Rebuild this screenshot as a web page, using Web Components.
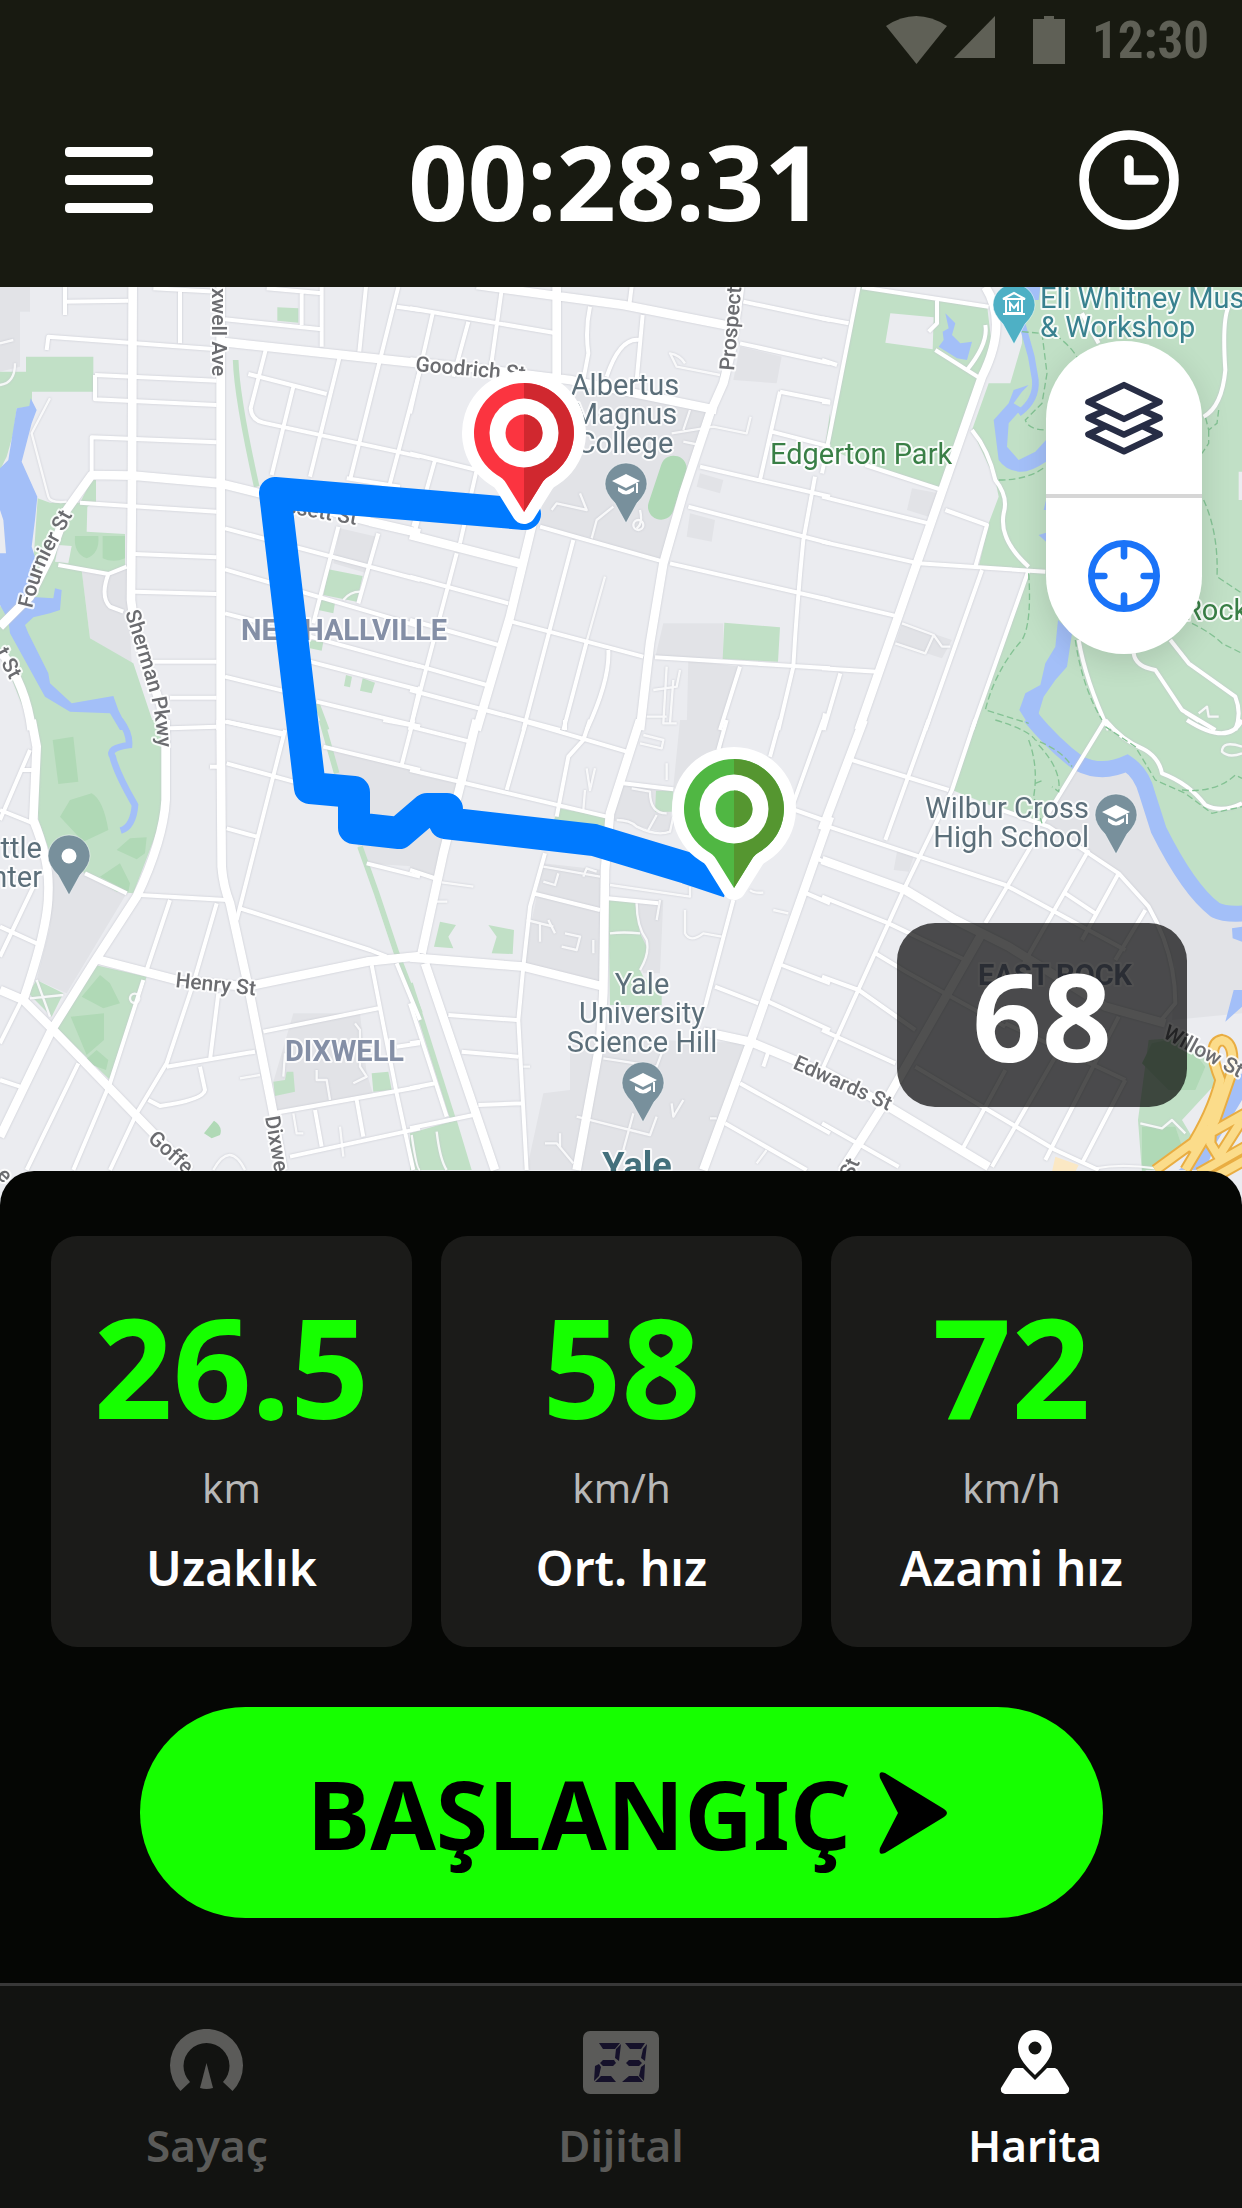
<!DOCTYPE html>
<html lang="tr">
<head>
<meta charset="utf-8">
<meta name="viewport" content="width=device-width, initial-scale=1">
<title>Harita</title>
<style>
  html, body { margin: 0; background: #050604; }
  body { font-family: "Noto Sans", "Open Sans", sans-serif; color: #fff; }
</style>
</head>
<body>
<app-shell>
  <status-bar slot="top">12:30</status-bar>
  <top-bar slot="top">00:28:31</top-bar>
  <map-view slot="map">
    <map-controls></map-controls>
    <speed-badge>68</speed-badge>
  </map-view>
  <stats-panel slot="panel">
    <stat-card><span slot="value">26.5</span><span slot="unit">km</span>Uzaklık</stat-card>
    <stat-card><span slot="value">58</span><span slot="unit">km/h</span>Ort. hız</stat-card>
    <stat-card><span slot="value">72</span><span slot="unit">km/h</span>Azami hız</stat-card>
    <start-button slot="action">BAŞLANGIÇ</start-button>
  </stats-panel>
  <tab-bar slot="tabs">
    <tab-item href="#sayac">
      <svg slot="icon" width="74" height="66" viewBox="0 0 74 66" fill="#5b5b59"><path d="M10.500 62A36.500 36.500 0 1 1 62.500 62L53 53A23 23 0 1 0 20 53Z"/><path d="M36.500 34L43 59Q36.500 61 30 59Z"/></svg>
      Sayaç
    </tab-item>
    <tab-item href="#dijital">
      <svg slot="icon" width="76" height="66" viewBox="0 0 76 66"><rect y="2" width="76" height="63" rx="7" fill="#5b5b59"/><g fill="#15112a"><path d="M16 14H37L32 20H20ZM38 15L36 32L32 29L33 20ZM20 31H31L33 34L30 37H20L17 34ZM16 35L18 38L16 47L11 52L12 37ZM18 47H28L33 53H12ZM42 14H62L58 20H47ZM64 15L62 32L58 29L60 20ZM46 31H56L59 34L56 37H46L43 34ZM58 38L62 35L61 52L56 47ZM46 47H55L60 53H39Z"/></g></svg>
      Dijital
    </tab-item>
    <tab-item href="#harita" active>
      <svg slot="icon" width="70" height="66" viewBox="0 0 70 66" fill="#fff"><path fill-rule="evenodd" d="M35 1C45 1 52 9 52 19C52 30 42 39 35 46C28 39 18 30 18 19C18 9 25 1 35 1ZM35 12.500A6.500 6.500 0 1 0 35 25.500A6.500 6.500 0 1 0 35 12.500Z"/><path d="M15 39H23L35 51L47 39H55Q58 40 59 43L69 59Q70 64 65 65H5Q0 64 1 59L11 43Q12 40 15 39Z"/></svg>
      Harita
    </tab-item>
  </tab-bar>
</app-shell>

<script>
const define = (name, markup, setup) => {
  const template = document.createElement('template');
  template.innerHTML = markup;
  customElements.define(name, class extends HTMLElement {
    connectedCallback() {
      if (this.shadowRoot) return;
      this.attachShadow({ mode: 'open' }).append(template.content.cloneNode(true));
      if (setup) setup(this, this.shadowRoot);
    }
  });
};

define('app-shell', `
  <style>
    :host { display: flex; flex-direction: column; min-height: 100vh; }
    .map { flex: 1; display: flex; min-height: 600px; }
    .map ::slotted(*) { flex: 1; }
    main { display: flex; flex-direction: column; flex: 1; }
  </style>
  <header><slot name="top"></slot></header>
  <main><div class="map"><slot name="map"></slot></div><slot name="panel"></slot></main>
  <slot name="tabs"></slot>`);

define('status-bar', `
  <style>
    :host { display: flex; justify-content: flex-end; align-items: center; height: 72px; padding: 10px 33px 0 0; box-sizing: border-box; background: #181a11; color: #5f6056; font: 700 51px/62px "Roboto Condensed", Roboto, sans-serif; }
    svg { margin-right: 26px; }
  </style>
  <svg width="180" height="50" viewBox="0 0 180 50" fill="currentColor" aria-hidden="true"><path d="M0 10Q30-10 61 10L30.500 48Z"/><path d="M109 0V42H68Z"/><path d="M147 3H158V0H168V3H179V48H147Z"/></svg>
  <slot></slot>`);

define('top-bar', `
  <style>
    :host { display: flex; justify-content: space-between; align-items: center; height: 215px; padding: 0 63px 0 65px; box-sizing: border-box; background: #181a11; }
    button { padding: 0; border: 0; background: none; color: #fff; display: flex; }
    h1 { margin: 0; padding-top: 3px; font-size: 104px; line-height: 140px; font-weight: 700; }
  </style>
  <button aria-label="Menü"><svg width="88" height="66" viewBox="0 0 88 66" fill="currentColor"><rect width="88" height="10" rx="4"/><rect y="28" width="88" height="10" rx="4"/><rect y="56" width="88" height="10" rx="4"/></svg></button>
  <h1><slot></slot></h1>
  <button aria-label="Geçmiş"><svg width="100" height="100" viewBox="0 0 100 100" fill="none" stroke="currentColor" stroke-width="9.500" stroke-linecap="round" stroke-linejoin="round"><circle cx="50" cy="50" r="45"/><path d="M50 30V50H75"/></svg></button>`);

const SHEETS = { a: [0, 280], b: [410, 280], c: [822, 280], d: [0, 720], e: [410, 720], f: [822, 720] };
const sheet = (id, body) => `<g transform="translate(${SHEETS[id]}) scale(.33333)">${body}</g>`;
const p = (cls, d) => `<path class="${cls}" d="${d}"/>`;

const land = [
  sheet('a', p('block', 'M0 20H90V95H60V260L0 275ZM245 870L380 860L395 1150L270 1075ZM1020 745L1130 770L1100 880L1000 850Z')
    + p('park', 'M0 275H78V230H280V335H96V380L50 385L40 460L20 530L0 570ZM113 655L150 668H240L275 600H288V665L262 680L260 755L375 762V860L325 880L245 870L270 1075L400 1150L470 1360H100L40 1210L0 1110V980L100 850ZM832 82L895 85V128L832 122ZM985 868L1088 888L1070 965L970 945ZM960 955L1005 968L1000 1000L955 990ZM930 1080L970 1085L965 1112L930 1105ZM1038 1185L1056 1190L1050 1222L1032 1218ZM1088 1195L1125 1208L1115 1240L1080 1232Z')
    + p('base', 'M175 795L215 798L205 850L165 845Z')
    + p('grove', 'M225 768L295 768Q300 820 260 835Q220 820 225 768ZM308 768H375V835Q340 850 308 835Z')
    + p('rail', 'M707 240Q710 350 770 620M950 1270L980 1350')),
  sheet('b', p('block', 'M500 310L900 400L830 640L760 840L390 740L400 620ZM990 200L1115 230L1100 310L970 300ZM870 580L940 600L930 640L860 620ZM840 700L915 720L905 785L830 770ZM760 1030H940V1135H735ZM835 1140L990 1160L930 1350H830Z')
    + p('park', 'M943 1028L1110 1042L1104 1145L938 1137ZM1260 400L1245 500H1260Z')
    + '<path d="M791 566L753 680" stroke="#b0d9b6" stroke-width="78" stroke-linecap="round"/>'),
  sheet('c', p('park', 'M115 20L495 75L510 200L470 300L355 625L130 555L10 500ZM500 310H565L600 190V20H1260V1930L1180 1890L1080 1780L1000 1650L940 1450L770 1450L660 1630L540 1590L390 1530L620 870L470 860L500 730L530 650L520 600L450 450Z')
    + p('base', 'M205 100L335 112L332 208L190 188ZM1250 575H1260V660H1250Z')
    + p('block', 'M270 625L350 640L320 710L255 690ZM240 1030L390 1080L360 1135L220 1090Z')),
  sheet('d', p('block', 'M160 420L255 460L380 520L200 820L110 780L150 620ZM980 85L1260 150V440L1090 430L1050 300ZM880 880L1080 880L1100 1060L1120 1125L830 1170L820 1085Z')
    + p('park', 'M100 0H470L495 100L480 310L400 520L350 515L255 460L150 400L115 300ZM285 735L440 770L405 870L330 1080L170 925ZM110 780L190 820L155 890L85 820ZM820 1085L855 1080L860 1055H880L885 1115L825 1128ZM1115 1060L1165 1055L1175 1110L1120 1115Z')
    + p('grove', 'M158 60L220 50L235 185L175 192ZM180 290L210 240L275 220Q310 240 325 330L250 365ZM350 390L390 355L440 352L435 400L410 418ZM300 470L360 430L390 490L385 515ZM245 830L300 765L330 790L360 850L310 865ZM212 890L312 880V960L260 1005ZM250 1025L290 990L325 1020L318 1050ZM612 1240L642 1202Q670 1220 660 1245L635 1255Z')
    + p('rail', 'M965 0L1010 160M1080 380L1130 520L1190 700L1260 880')),
  sheet('e', p('block', 'M810 0H950L900 330L790 200ZM630 190L790 210L780 340L600 300ZM400 430L580 450L570 790L340 730ZM640 540H760L750 760L700 760ZM480 950L1020 970L880 1350H350L400 1120L480 1110ZM0 160L140 190L90 470L0 450Z')
    + p('park', 'M595 540L675 545L690 640L715 690L690 750L700 770L755 820V855H600ZM445 265L585 290L588 322L430 305ZM738 212H790L785 275H735ZM90 605L138 615L115 650L130 685L72 680ZM235 615L312 630L308 702L245 700L260 650ZM0 1240L140 1200L185 1350H0Z')
    + p('rail', 'M0 790L130 1200')),
  sheet('f', p('block', 'M660 310L770 140H930L1000 330L1080 480L1180 570L1260 600V880L1050 900L1060 740L1000 610L900 460ZM225 395L275 410L260 455L215 450Z')
    + p('park', 'M980 960L1100 950L1210 1060L1080 1200L1110 1250L960 1360L948 1200Z')
    + p('grove', 'M990 970L1080 950L1150 1040L1120 1110L1040 1110L960 1030ZM960 1220L1060 1220L1080 1280L1000 1350H960Z')
    + '<path fill="#fbe8c4" d="M700 1310L770 1335L760 1355H690Z"/>')
].join('');

const water = [
  sheet('a', p('water', 'M50 385L88 378L92 355L110 390L95 430L65 545L112 650L105 720L95 800L108 840L105 880L85 950L160 955L165 925L185 930L180 990L150 1000L100 1012L75 1035L85 1060L145 1180L150 1210L215 1270L340 1248L355 1290L385 1350H360L330 1300L210 1295L135 1250L30 1060L25 1020L0 975V820H18L10 720L0 690V565L25 540Z')),
  sheet('c', p('water', 'M370 100L400 130L390 165L415 190L450 185L435 240L405 235L350 200L365 180L362 155L380 145ZM605 20H655L650 60H610ZM515 420L560 370L575 330L620 315L600 335L575 370L600 385L560 430L555 500L590 540L640 515L672 480V545Q620 580 590 575Q550 570 530 540ZM672 660L665 690H672ZM650 765L672 758V785ZM708 1020L750 1060L735 1160L700 1200L665 1250L650 1300L675 1350H630L592 1290L610 1240L655 1215L670 1150L700 1100Z')
    + '<path d="M618 70L600 130L628 230L640 300Q645 360 590 400" fill="none" stroke="#a3bff8" stroke-width="20"/>'),
  sheet('d', '<path d="M360 0Q390 40 387 75Q320 85 338 110Q350 160 405 255Q400 320 362 332" fill="none" stroke="#a3bff8" stroke-width="20"/>'),
  sheet('f', '<path d="M625 -10Q700 80 770 130Q840 165 915 130Q960 160 975 220L1010 330Q1100 510 1180 570Q1210 585 1270 580" fill="none" stroke="#a3bff8" stroke-width="48"/>'
    + p('water', 'M1230 625L1260 620V665L1232 655ZM1235 810H1260V860L1210 905ZM1195 1170L1215 1100L1260 1060V1140L1170 1290ZM1070 1350L1190 1250L1150 1350Z'))
].join('');

const roads = [
  sheet('a', p('r3', 'M398 20L396 590L393 960L405 1050L480 1270L497 1350M662 20V1350M0 1040L90 950L150 830L200 690L275 585L400 587L660 610L780 640L1110 725L1260 760M0 1110Q80 1220 95 1350M660 185L1260 250')
    + p('r1', 'M195 20V105M195 65L385 62M540 25V190M460 25L650 35M140 210L145 170L650 208M285 285L650 302M285 285V358L650 375M275 585V472L650 487M240 668L650 695M405 822L650 832M405 935L650 942M440 1145H650M510 1253H650M175 855L325 882L380 860M325 882Q300 950 330 980L370 995M675 118L965 148M965 20V200M905 40V135M800 25L965 40M1098 20L1078 215M1195 20L1145 220L1050 600M1190 80L1260 90M797 210L752 385Q755 420 790 428L1260 530M745 282L980 342M880 320L815 585M1018 235L930 590M1260 270L1170 610M1040 595L1200 620M675 745L1260 900M675 868L1260 1040M675 1000L810 1035M930 1070L1260 1160M675 1190L860 1235M930 1145L1260 1230M950 1265L1260 1340M675 1325L850 1360M1015 740L940 1030M1135 760L1075 970M1260 1220L1230 1350M1240 740L1250 700')
    + p('r0', 'M150 355L95 460L145 650Q150 670 200 665M0 190L40 180M0 315Q45 310 45 250M1030 960Q1050 935 1080 935')),
  sheet('b', p('r3', 'M200 15L440 48L640 75L960 138M440 20V290M0 245L200 265L480 300L920 390M990 20L965 210L940 310L900 400L820 640L760 850L720 1090L690 1350M375 700L300 1010L200 1350M0 765L330 850')
    + p('r1', 'M0 85L430 158M275 30L240 280M68 100L0 400M175 125L130 290M665 20L658 75M540 80Q525 150 535 220L520 300M698 105L680 300M590 290Q630 170 690 180M1000 65L1260 120M990 190L1260 250M1110 335L1050 600M1110 335L1260 365M1085 455L1260 500M870 560L1260 650M835 680L1260 790M780 850L1260 960M1215 590L1180 780Q1160 980 1150 1160L1105 1350M1245 1300L1235 1350M735 1132L1260 1165M990 1160L930 1350M390 740L760 845M490 780L340 1350M530 1085L460 1350M595 1110Q600 1200 530 1350M305 1025L700 1130M0 520L200 570M0 890L295 970M0 1020L265 1095M0 1150L230 1215M0 1230L450 1350M140 820L0 1350M75 540L10 770M200 570L150 790')
    + p('r0', 'M585 890L530 1085M930 285L800 260L780 220Q810 225 825 250M545 775L560 720L610 680M690 690Q700 730 680 745M670 735A14 14 0 1 0 700 735A14 14 0 1 0 670 735M425 690L440 670L530 690L510 640M785 460L910 440L1010 460L1022 410M820 485L870 495M840 390L820 450M770 1160L760 1330L800 1330M730 1230L800 1220L810 1170M790 1200L780 1330M710 1310H770')),
  sheet('c', p('r3', 'M490 20Q560 130 480 290L110 1350')
    + p('r1', 'M110 20L0 580M0 115L80 130M0 240L45 255M0 365L25 368M120 22L500 80M345 60V130L320 155M340 210L470 292M490 135Q500 190 435 270M130 555L360 630M0 650L320 730M0 785L290 850L670 875M0 955L230 1010M370 690L495 735L460 860M480 870L310 1350M620 870L450 1350M0 1165L165 1175M55 1180L5 1350M450 450Q500 510 520 600Q560 650 545 700Q530 780 620 860M1220 80Q1200 120 1210 270Q1200 380 1145 410M770 1080Q790 1200 860 1350M935 1120Q940 1160 1000 1170L1080 1290L1180 1350M1045 1080L1100 1150L1240 1250Q1260 1300 1240 1350M780 100L830 190')
    + p('r0', 'M240 1030L335 1065L310 1120L220 1090M335 1065L360 1100H385M1130 1300L1155 1280L1160 1310H1190M1090 1300L1130 1325')),
  sheet('d', p('r3', 'M497 0V240Q490 360 410 530L280 730L155 930L0 1250M662 0L665 440Q670 500 690 550L745 800L820 1180L850 1350M95 0L110 80L100 300Q150 420 145 520Q145 620 70 840M280 715L530 780L740 800L1100 725L1260 708M0 810L70 840L160 930L460 1240L570 1350')
    + p('r1', 'M510 25L650 20M680 5L850 45M855 30L710 600M630 140H660M680 130L900 190M680 325L770 350M420 525L680 540M650 550L580 790L500 1030L410 1180L330 1350M510 540L440 750M720 565L1110 690L1160 710M255 460L380 520M790 935L1135 865M1115 735L1190 1120L1240 1350M500 1040L765 995M655 820L630 1020M600 1040L615 1110Q610 1140 480 1158L445 1140M430 780L330 1090L220 1350M235 1030L80 1350M0 620L110 670M100 500L0 710M0 270L100 310M90 90L0 300M60 150H100M70 830L0 970M0 1080L60 1100M820 1180L1260 1100M870 1310L1260 1225M945 1170L965 1280M1070 1140L1090 1250M1190 980L1260 970M1190 730L1260 900M970 80L1260 150M1100 430L1260 470M1150 0L1260 20M1240 0L1205 135')
    + p('r0', 'M390 835A14 14 0 1 0 418 835A14 14 0 1 0 390 835M90 835L190 825M110 780L150 890M640 1350Q690 1260 735 1350M720 1075L780 1065M850 1070L855 1000M950 1050V1080H980L990 1140M1065 910L1080 930V1040L1100 1070L1060 1090M880 1180L890 1240H910M1020 1220L1030 1310')),
  sheet('e', p('r3', 'M200 0L150 200L100 400L35 700M690 0L600 280L585 450L580 820L570 970L500 1350M0 712L340 740L580 800M880 935L1020 965L1260 1065M1260 290L1020 970L880 1350M45 730L255 1350')
    + p('r1', 'M0 20L180 65M0 150L590 290M350 0L290 210M345 5L650 95M465 30V0M540 0L520 60L475 110L440 290M405 400L360 560L340 740L325 900L350 1350M950 0L925 90M1110 0L1080 110M1240 0L1150 250M640 190L790 208M1150 268L1240 300M970 540L885 860M1220 415L1260 435M1190 520L1260 550M1115 735L1260 790M915 800L1045 850M1075 845L1260 930M990 1090L1260 1240M945 1210L1190 1350M115 885L320 900M155 995L325 1010M205 1155L335 1150M0 1225L190 1185M0 450L90 480M0 970L30 965M0 1105L75 1090M0 850L110 1190M1060 1040L1080 980M370 520L570 570M595 535L745 550')
    + p('r0', 'M95 487L190 500M80 545H112M600 495L840 530V500M680 550Q680 620 710 660Q720 700 690 750M600 640Q640 635 690 640M750 540L740 600M350 600L430 620M390 610V665M415 600L435 640M455 680L500 690L510 650L465 640M550 660V700M400 440L570 470M400 485L435 495L445 460M520 470L530 445L560 455M825 570V640Q840 670 880 640L935 650M1090 570L1135 580M1020 510Q1030 520 1060 518M620 300Q660 300 680 320Q740 350 780 335L790 290M665 205L720 215Q720 280 770 280M740 285L715 330M530 145L540 210L555 145M525 210L520 270M500 1190L720 1245L740 1190M670 1180L640 1290M405 1270H440L490 1330M450 1240V1280M785 1150L790 1190L820 1140M900 1195H920M580 1015L740 1040L755 1000M5 1245Q20 1350 30 1350M80 1235Q90 1320 110 1350M1070 1290L1040 1330M340 1040H360M770 130V180M690 70L755 85L760 60L700 45')),
  sheet('f', p('r3', 'M125 0L0 330M0 420L250 510L400 600L560 680L850 860L1030 910M480 640L200 1130L60 1350M0 1050L200 1160L500 1340')
    + p('r1', 'M850 0L660 310M850 0Q900 60 960 85Q1010 110 1020 160Q1100 190 1150 255Q1200 280 1260 250M1095 0Q1220 80 1260 0M460 0L390 210M320 0L190 360M90 120L380 210M20 320L550 495L910 690M540 270L680 320L890 460L980 560Q1060 700 1060 850L1010 910M390 210L240 520L0 1050M650 340L490 610M800 390L600 740M890 460L780 660M730 520L820 580M970 570L880 720M0 530L200 610L430 720M160 700L260 760L550 920M0 770L110 810L280 930M0 930L220 1030M0 1210L230 1340M280 1040L700 1290L830 1350M550 1050L420 1290M700 1010L510 1340M890 890L670 1320M910 1080L780 1330M550 910L910 1080')
    + p('r0', 'M820 1345Q900 1330 1000 1345M955 1210L1020 1225L1050 1200L1090 1240M1260 80Q1200 60 1200 95Q1220 115 1260 100'))
].join('');

const trails = sheet('c', p('trail', 'M600 155L660 160L675 280L660 370L610 420Q620 450 672 450M700 165Q750 200 770 240M530 600Q620 600 670 560M1190 390L1185 430L1160 450L1150 410M1160 450V490L1140 520M1145 660Q1190 760 1185 890L1260 940M620 880Q630 1030 600 1080Q520 1170 490 1290L620 1330M1110 1030Q1170 1060 1200 1090L1260 1120M760 1080Q780 1220 840 1320'))
  + sheet('f', p('trail', 'M520 0Q620 30 640 60Q720 90 750 140M620 60Q650 140 635 230L660 310M650 75Q720 150 710 215L690 200M640 190L665 180M850 20L940 80L1000 180L1090 220L1170 280L1260 260M1080 210Q1180 220 1240 165L1260 175'));

const expressways = sheet('f', ['e1', 'e2'].map(c => p(c, 'M1100 1290Q1170 1180 1195 1080Q1150 970 1200 960Q1245 970 1225 1070L1180 1200L1090 1350M1195 1080L1170 1180L1165 1270L1190 1310L1260 1200M1000 1350L1110 1270L1270 1180M1130 1360L1270 1280M1180 1370L1270 1320')).join(''));

const label = (x, y, lines, cls = 'poi', anchor = 'start', rot = 0) => [].concat(lines)
  .map((t, i) => `<text class="${cls}" x="${x}" y="${y + i * 29}" text-anchor="${anchor}"${rot ? ` transform="rotate(${rot} ${x} ${y})"` : ''}>${t}</text>`).join('');

const labels = [
  label(625, 395, ['Albertus', 'Magnus', 'College'], 'poi', 'middle'),
  label(642, 994, ['Yale', 'University', 'Science Hill'], 'poi', 'middle'),
  label(1089, 818, ['Wilbur Cross', 'High School'], 'poi', 'end'),
  label(42, 858, ['ttle', 'nter'], 'poi', 'end'),
  label(1040, 308, ['Eli Whitney Mus', '&amp; Workshop'], 'museum'),
  label(770, 464, 'Edgerton Park', 'green'),
  label(1184, 620, 'Rock', 'green'),
  label(241, 640, 'NEWHALLVILLE', 'area'),
  label(285, 1061, 'DIXWELL', 'area'),
  label(978, 985, 'EAST ROCK', 'area'),
  label(637, 1178, 'Yale', 'big', 'middle'),
  label(415, 371, 'Goodrich St', 'street', 'start', 5),
  label(734, 371, 'Prospect', 'street', 'start', -85),
  label(212, 288, 'xwell Ave', 'street', 'start', 90),
  label(175, 987, 'Henry St', 'street', 'start', 6),
  label(356, 525, 'Bassett St', 'street', 'end', 10),
  label(-5, 652, 't St', 'street', 'start', 62),
  label(147, 1140, 'Goffe', 'street', 'start', 42),
  label(265, 1117, 'Dixwe', 'street', 'start', 80),
  label(792, 1068, 'Edwards St', 'street', 'start', 24),
  label(1162, 1037, 'Willow St', 'street', 'start', 28),
  label(852, 1180, 'St', 'street', 'start', -66),
  label(-4, 1176, 'e', 'street', 'start', 45),
  '<path id="fournier" fill="none" d="M32 609Q42 565 58 542L78 505"/><text class="street"><textPath href="#fournier">Fournier St</textPath></text>',
  '<path id="sherman" fill="none" d="M125 612Q140 660 152 700Q158 730 158 760"/><text class="street"><textPath href="#sherman">Sherman Pkwy</textPath></text>'
].join('');

const drop = 'M0 39L-11 19Q-21 9 -21 0A21 21 0 0 1 21 0Q21 9 11 19Z';
const place = (x, y, color, glyph) => `<g transform="translate(${x} ${y})"><path d="${drop}" fill="${color}" stroke="#fff" stroke-opacity=".5"/>${glyph}</g>`;
const cap = '<path fill="#fff" d="M0-10L14-3L0 4L-14-3ZM-8 3L0 7L8 3V7Q0 14-8 7ZM10-1H12V9H10Z"/>';
const places = [
  place(626, 484, '#78909c', cap), place(643, 1083, '#78909c', cap), place(1116, 815, '#78909c', cap),
  place(69, 856, '#78909c', '<circle r="7.500" fill="#fff"/>'),
  place(1014, 305, '#4eb0c5', '<path fill="none" stroke="#fff" stroke-width="2" d="M-11-6H11L0-12ZM-8-6V8H8V-6M-11 9H11"/><path fill="none" stroke="#fff" stroke-width="2" d="M-4 6V-2L0 3L4-2V6"/>')
].join('');

const marker = (x, y, light, dark) => {
  const d = 'M0 79L-18 50Q-21 45-27 42A50 50 0 1 1 27 42Q21 45 18 50Z';
  return `<g transform="translate(${x} ${y})">
    <path d="${d}" fill="#fff" stroke="#fff" stroke-width="24" stroke-linejoin="round"/>
    <path d="${d}" fill="${light}"/><path d="M0 79V-50A50 50 0 0 1 27 42Q21 45 18 50Z" fill="${dark}"/>
    <circle r="34.500" fill="#fff"/><circle r="18.500" fill="${light}"/><path d="M0-18.500A18.500 18.500 0 0 1 0 18.500Z" fill="${dark}"/></g>`;
};

define('map-view', `
  <style>
    :host { display: block; position: relative; overflow: hidden; background: #ebecf0; }
    svg.map { position: absolute; inset: 0; width: 100%; height: 100%; }
    .base { fill: #ebecf0; } .block { fill: #e2e3e7; } .park { fill: #c1e0c6; } .grove { fill: #b0d9b6; } .water { fill: #a3bff8; }
    .rail { fill: none; stroke: #c1e0c6; stroke-width: 17; }
    .roads { fill: none; stroke: #fff; stroke-linejoin: round; filter: drop-shadow(0 0 1px #c3c5cd); }
    .r3 { stroke-width: 26; } .r1 { stroke-width: 12; } .r0 { stroke-width: 7; stroke-opacity: .85; }
    .trail { fill: none; stroke: #84c294; stroke-width: 4; stroke-dasharray: 20 10; }
    .e1 { fill: none; stroke: #e9ad42; stroke-width: 36; } .e2 { fill: none; stroke: #fbdc8a; stroke-width: 24; }
    text { font-family: Roboto, sans-serif; font-size: 29px; stroke: #fff; stroke-opacity: .85; stroke-width: 4px; paint-order: stroke; stroke-linejoin: round; }
    .poi { fill: #5c6f7a; } .museum { fill: #38818f; } .green { fill: #397f46; }
    .area { fill: #848fa6; font-weight: 700; } .street { fill: #6b6c70; font-size: 21px; font-weight: 500; }
    .big { fill: #44707c; font-size: 36px; font-weight: 700; }
    .route { fill: none; stroke: #007aff; stroke-width: 32; stroke-linejoin: round; }
  </style>
  <svg class="map" viewBox="0 287 1242 924" preserveAspectRatio="xMidYMin slice" role="img" aria-label="Rota haritası">
    ${land}${water}<g class="roads">${roads}</g>${trails}${expressways}${labels}${places}
    <path class="route" d="M525 514L275 493L310 788L354 792V828L399 833L427 809H447L445 823L594 840L687 868L729 882"/>
    <circle cx="525" cy="514" r="16" fill="#007aff"/>
    ${marker(524, 433, '#fb3440', '#d0282f')}${marker(734, 809, '#50b743', '#559630')}
  </svg>
  <slot></slot>`);

define('map-controls', `
  <style>
    :host { position: absolute; top: 54px; right: 40px; display: flex; flex-direction: column; width: 156px; border-radius: 78px; overflow: hidden; background: #fff; box-shadow: 0 8px 30px rgba(0, 0, 0, .12); }
    button { display: flex; align-items: center; justify-content: center; height: 153px; padding: 0; border: 0; background: none; }
    button + button { border-top: 4px solid #d6d6d6; height: 160px; }
  </style>
  <button aria-label="Katmanlar"><svg width="80" height="76" viewBox="786 304 240 228" fill="none" stroke="#272d45" stroke-width="19" stroke-linejoin="round" stroke-linecap="round"><path d="M906 319L1013 370L906 421L799 370ZM846 397L799 418L906 468L1013 418L966 397M846 445L799 467L906 518L1013 467L966 445"/></svg></button>
  <button aria-label="Konumum"><svg width="74" height="74" viewBox="795 776 222 222" fill="none" stroke="#1a73f8" stroke-width="20" stroke-linecap="round"><circle cx="906" cy="887" r="98"/><path d="M906 795V828M906 946V980M814 887H847M965 887H998"/></svg></button>`);

define('speed-badge', `
  <style>
    :host { position: absolute; right: 55px; bottom: 104px; width: 290px; height: 184px; display: flex; align-items: center; justify-content: center; border-radius: 38px; background: rgba(2, 2, 2, .69); font-size: 122px; line-height: 184px; font-weight: 700; }
  </style>
  <slot></slot>`);

define('stats-panel', `
  <style>
    :host { display: flex; flex-direction: column; gap: 60px; position: relative; margin-top: -40px; padding: 65px 50px 65px 51px; border-radius: 34px 34px 0 0; background: #050604; }
    .cards { display: grid; grid-template-columns: repeat(3, 1fr); gap: 29px; }
  </style>
  <section class="cards"><slot></slot></section>
  <slot name="action"></slot>`);

define('stat-card', `
  <style>
    :host { display: flex; flex-direction: column; align-items: center; gap: 20px; padding: 54px 0 47px; border-radius: 26px; background: #1b1b19; }
    .value { color: #16ff00; font-size: 138px; line-height: 150px; font-weight: 700; }
    .unit { color: #b8b8b8; font-size: 40px; line-height: 56px; font-weight: 400; }
    .name { font-size: 48px; line-height: 64px; font-weight: 600; }
  </style>
  <div class="value"><slot name="value"></slot></div>
  <div class="unit"><slot name="unit"></slot></div>
  <div class="name"><slot></slot></div>`);

define('start-button', `
  <style>
    :host { display: flex; padding: 0 89px; }
    button { flex: 1; display: flex; align-items: center; justify-content: center; gap: 28px; height: 211px; padding: 0 0 0 12px; border: 0; border-radius: 106px; background: #16ff00; color: #000; font: inherit; font-size: 95px; line-height: 120px; font-weight: 700; }
  </style>
  <button><slot></slot><svg width="69" height="82" viewBox="0 0 69 82" aria-hidden="true"><path d="M1 6Q-1-2 6 1L65 37Q71 41 65 45L6 81Q-1 84 1 76L19 41Z"/></svg></button>`);

define('tab-bar', `
  <style>
    :host { display: block; }
    nav { display: grid; grid-template-columns: repeat(3, 1fr); border-top: 3px solid #383838; background: #121311; }
  </style>
  <nav><slot></slot></nav>`);

define('tab-item', `
  <style>
    :host { display: block; }
    a { display: flex; flex-direction: column; align-items: center; gap: 22px; padding: 43px 0 35px; color: #5b5b59; text-decoration: none; font-size: 44px; line-height: 56px; font-weight: 600; }
    :host([active]) a { color: #fff; }
  </style>
  <a><slot name="icon"></slot><span><slot></slot></span></a>`, (host, root) => {
  const link = root.querySelector('a');
  link.href = host.getAttribute('href');
  if (host.hasAttribute('active')) link.setAttribute('aria-current', 'page');
});
</script>
</body>
</html>
